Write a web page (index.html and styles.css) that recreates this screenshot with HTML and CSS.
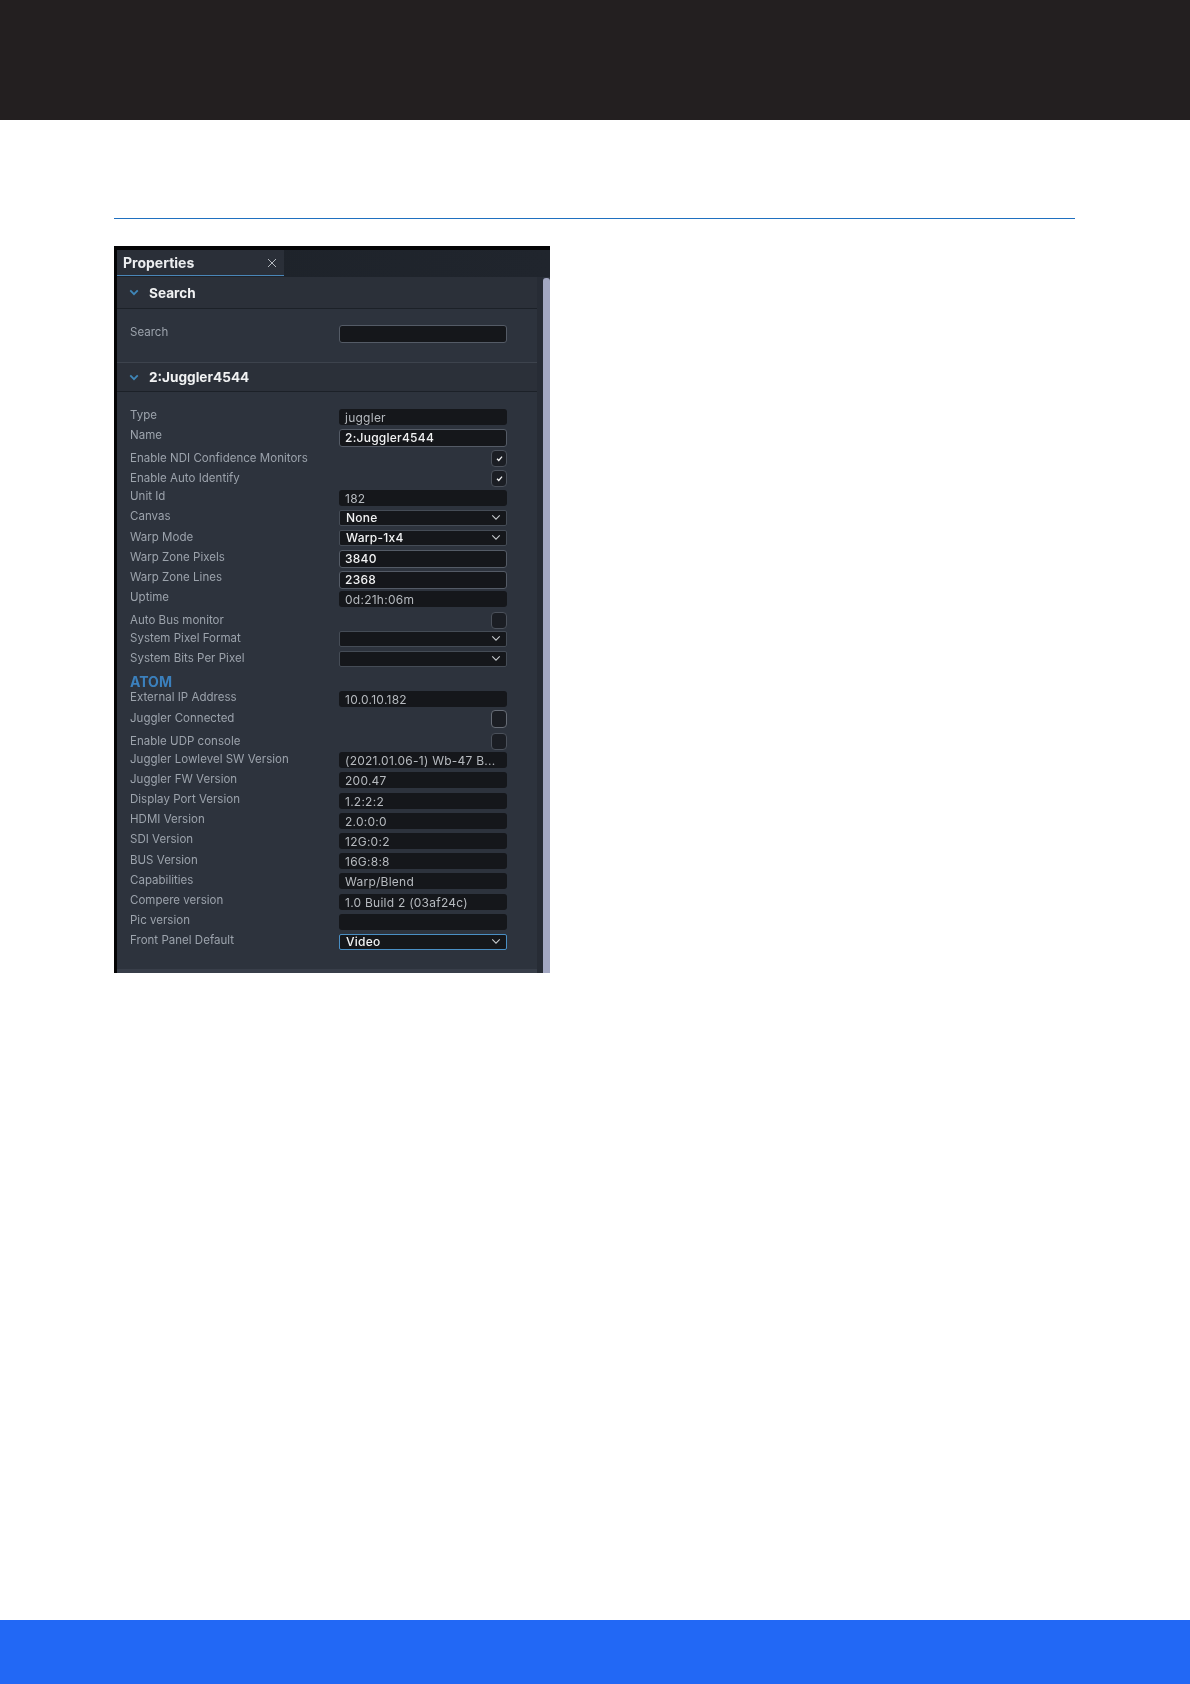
FILE: index.html
```html
<!DOCTYPE html>
<html lang="en">
<head>
<meta charset="utf-8">
<title>Properties</title>
<link rel="stylesheet" href="styles.css">
</head>
<body>
<svg class="defs" width="0" height="0" aria-hidden="true">
  <symbol id="chev" viewBox="0 0 12 8"><path d="M1.5 1.5 6 6l4.5-4.5" fill="none" stroke="currentColor" stroke-width="1.3"/></symbol>
  <symbol id="chev-bold" viewBox="0 0 12 8"><path d="M1.5 1.5 6 6l4.5-4.5" fill="none" stroke="currentColor" stroke-width="2.2"/></symbol>
  <symbol id="tick" viewBox="0 0 10 10"><path d="M2.2 5.2 4.2 7.2 7.8 3" fill="none" stroke="currentColor" stroke-width="1.4"/></symbol>
</svg>
<div class="page">
  <header class="topbar"></header>
  <div class="rule"></div>
  <section class="panel">
    <div class="tabbar">
      <div class="tab">
        <span class="tab-title">Properties</span>
        <svg class="tab-close" viewBox="0 0 10 10"><path d="M1 1l8 8M9 1l-8 8" fill="none" stroke="currentColor" stroke-width="1"/></svg>
      </div>
    </div>
    <div class="body">
      <div class="main">
        <div class="sec-head"><svg class="sec-chev"><use href="#chev-bold"/></svg><span>Search</span></div>
        <div class="search-body">
          <span class="label">Search</span>
          <div class="ctl edit"></div>
        </div>
        <div class="sec-head sec-second"><svg class="sec-chev"><use href="#chev-bold"/></svg><span>2:Juggler4544</span></div>
        <div class="rows">
          <div class="row"><span class="label label-up">Type</span><div class="ctl">juggler</div></div>
          <div class="row"><span class="label label-up">Name</span><div class="ctl edit">2:Juggler4544</div></div>
          <div class="row"><span class="label label-cb">Enable NDI Confidence Monitors</span><div class="cb"><svg><use href="#tick"/></svg></div></div>
          <div class="row"><span class="label label-cb">Enable Auto Identify</span><div class="cb"><svg><use href="#tick"/></svg></div></div>
          <div class="row"><span class="label">Unit Id</span><div class="ctl">182</div></div>
          <div class="row"><span class="label">Canvas</span><div class="ctl sel">None<svg class="sel-chev"><use href="#chev"/></svg></div></div>
          <div class="row"><span class="label">Warp Mode</span><div class="ctl sel">Warp-1x4<svg class="sel-chev"><use href="#chev"/></svg></div></div>
          <div class="row"><span class="label">Warp Zone Pixels</span><div class="ctl edit">3840</div></div>
          <div class="row"><span class="label">Warp Zone Lines</span><div class="ctl edit">2368</div></div>
          <div class="row"><span class="label">Uptime</span><div class="ctl">0d:21h:06m</div></div>
          <div class="row row-bus"><span class="label label-cb">Auto Bus monitor</span><div class="cb"></div></div>
          <div class="row"><span class="label">System Pixel Format</span><div class="ctl sel"><svg class="sel-chev"><use href="#chev"/></svg></div></div>
          <div class="row"><span class="label">System Bits Per Pixel</span><div class="ctl sel"><svg class="sel-chev"><use href="#chev"/></svg></div></div>
          <div class="atom">ATOM</div>
          <div class="row row-ext"><span class="label">External IP Address</span><div class="ctl">10.0.10.182</div></div>
          <div class="row"><span class="label">Juggler Connected</span><div class="cb cb-big"></div></div>
          <div class="row"><span class="label label-cb">Enable UDP console</span><div class="cb"></div></div>
          <div class="row"><span class="label">Juggler Lowlevel SW Version</span><div class="ctl">(2021.01.06-1) Wb-47 B...</div></div>
          <div class="row"><span class="label">Juggler FW Version</span><div class="ctl">200.47</div></div>
          <div class="row"><span class="label">Display Port Version</span><div class="ctl">1.2:2:2</div></div>
          <div class="row"><span class="label">HDMI Version</span><div class="ctl">2.0:0:0</div></div>
          <div class="row"><span class="label">SDI Version</span><div class="ctl">12G:0:2</div></div>
          <div class="row"><span class="label">BUS Version</span><div class="ctl">16G:8:8</div></div>
          <div class="row"><span class="label">Capabilities</span><div class="ctl">Warp/Blend</div></div>
          <div class="row"><span class="label">Compere version</span><div class="ctl">1.0 Build 2 (03af24c)</div></div>
          <div class="row"><span class="label">Pic version</span><div class="ctl"></div></div>
          <div class="row"><span class="label">Front Panel Default</span><div class="ctl sel focus">Video<svg class="sel-chev"><use href="#chev"/></svg></div></div>
        </div>
        <div class="sec-end"></div>
      </div>
      <div class="gutter"></div>
      <div class="scrolltrack"><div class="thumb"></div></div>
    </div>
  </section>
  <footer class="footbar"></footer>
</div>
</body>
</html>
```
FILE: styles.css
```css
* { box-sizing: border-box; }
html, body { margin: 0; padding: 0; background: #fff; }
.defs { position: absolute; }
.page { height: 1684px; display: flex; flex-direction: column; font-family: Inter, "Liberation Sans", sans-serif; }
.topbar { height: 120px; flex: none; background: #231f20; }
.rule { height: 1px; flex: none; margin: 98px 115px 0 114px; background: #1f70c0; }
.footbar { height: 64px; flex: none; margin-top: auto; background: #2268f5; }

.panel { flex: none; width: 436px; height: 727px; margin: 27px 0 0 114px; background: #2d333d; border-top: 4px solid #050506; border-left: 3px solid #050506; display: flex; flex-direction: column; overflow: hidden; filter: blur(0.45px); }
.tabbar { height: 27px; flex: none; background: linear-gradient(90deg, #1d2229, #20252d); display: flex; }
.tab { width: 167px; height: 26px; background: #2a2f38; border-bottom: 1px solid #4a86b8; display: flex; align-items: center; justify-content: space-between; padding: 0 7px 0 6px; }
.tab-title { color: #eceef0; font-size: 14px; font-weight: 700; }
.tab-close { width: 10px; height: 10px; color: #b4b9bf; }

.body { flex: 1; display: flex; min-height: 0; }
.main { width: 420px; flex: none; display: flex; flex-direction: column; }
.gutter { width: 6px; flex: none; background: #272c35; }
.scrolltrack { width: 7px; flex: none; padding-top: 1px; }
.thumb { height: 100%; background: #a3a8c2; border-radius: 3px 3px 0 0; }

.sec-head { height: 32px; flex: none; display: flex; align-items: center; gap: 10px; padding: 0 0 0 12px; background: #2b3039; border-bottom: 1px solid #1c2128; color: #f1f2f3; font-size: 13.6px; font-weight: 700; }
.sec-second { height: 29px; }
.sec-chev { width: 10px; height: 7px; color: #3f86b8; }

.search-body { height: 54px; flex: none; display: flex; justify-content: space-between; padding: 16px 30px 0 13px; border-bottom: 1px solid #3d434d; }
.rows { flex: 1; padding-top: 17px; }
.row { height: 20.2px; display: flex; justify-content: space-between; align-items: flex-start; padding: 0 30px 0 13px; }
.row-ext { height: 21px; }
.label { color: #9ca3ac; font-size: 11.5px; line-height: 14px; letter-spacing: 0.02px; margin-top: -0.5px; }
.search-body .label { margin-top: 0; }
.label-up { margin-top: -1.5px; }
.label-cb { margin-top: 1.5px; }

.ctl { position: relative; width: 168px; height: 16px; flex: none; background: #15171b; border-radius: 3px; color: #b6babf; font-size: 12px; line-height: 17px; padding-left: 6px; letter-spacing: 0.25px; white-space: nowrap; }
.edit { height: 18px; border: 1px solid #545b66; line-height: 16px; padding-left: 5px; color: #f2f3f4; font-weight: 500; }
.sel { border: 1px solid #454c56; line-height: 14px; color: #f2f3f4; font-weight: 500; border-radius: 2px; }
.focus { border-color: #4a8fc4; }
.sel-chev { position: absolute; right: 5px; top: 3px; width: 10px; height: 7px; color: #c6cace; }

.cb { width: 16px; height: 17px; flex: none; margin-top: 0.5px; background: #1b1e24; border: 1px solid #4b515b; border-radius: 4px; color: #f2f3f4; display: flex; align-items: center; justify-content: center; }
.cb svg { width: 9px; height: 9px; }
.cb-big { height: 18px; margin-top: -2px; border-color: #666c76; }
.row-bus .cb { margin-top: 1.5px; }
.row-bus .label { margin-top: 2.5px; }

.atom { height: 19.4px; padding: 3px 0 0 13px; color: #3b80bd; font-size: 14px; line-height: 15px; font-weight: 700; }
.sec-end { height: 4px; flex: none; background: #383e49; }
```
